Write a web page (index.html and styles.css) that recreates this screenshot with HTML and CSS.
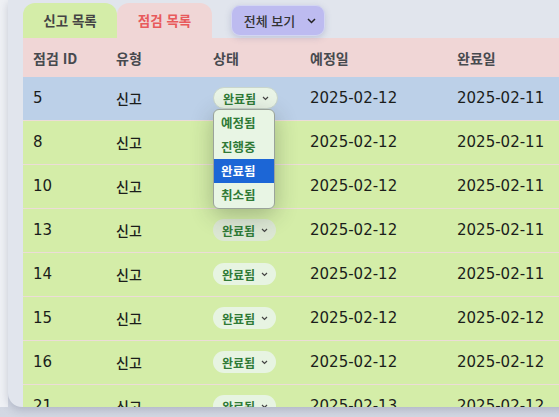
FILE: index.html
```html
<!DOCTYPE html>
<html lang="ko">
<head>
<meta charset="utf-8">
<link rel="stylesheet" href="styles.css">
</head>
<body>
<div class="page">
  <div class="card">
    <div class="tabs">
      <div class="tab tab-report">신고 목록</div>
      <div class="tab tab-inspect">점검 목록</div>
      <button class="filter">전체 보기 <svg class="chev" width="9" height="6" viewBox="0 0 9 6"><path d="M1 1l3.5 3.5L8 1" fill="none" stroke="#222" stroke-width="1.5"/></svg></button>
    </div>
    <table class="grid">
      <colgroup><col class="c1"><col class="c2"><col class="c3"><col class="c4"><col class="c5"></colgroup>
      <thead>
        <tr><th>점검 ID</th><th>유형</th><th>상태</th><th>예정일</th><th>완료일</th></tr>
      </thead>
      <tbody>
        <tr class="hover"><td>5</td><td>신고</td><td class="status-cell"><span class="pill open">완료됨 <svg class="chev" width="7" height="5" viewBox="0 0 7 5"><path d="M1 1l2.5 2.5L6 1" fill="none" stroke="#444" stroke-width="1.2"/></svg></span>
          <div class="menu">
            <div class="opt">예정됨</div>
            <div class="opt">진행중</div>
            <div class="opt sel">완료됨</div>
            <div class="opt">취소됨</div>
          </div></td><td>2025-02-12</td><td>2025-02-11</td></tr>
        <tr><td>8</td><td>신고</td><td></td><td>2025-02-12</td><td>2025-02-11</td></tr>
        <tr><td>10</td><td>신고</td><td></td><td>2025-02-12</td><td>2025-02-11</td></tr>
        <tr><td>13</td><td>신고</td><td><span class="pill shaded">완료됨 <svg class="chev" width="7" height="5" viewBox="0 0 7 5"><path d="M1 1l2.5 2.5L6 1" fill="none" stroke="#444" stroke-width="1.2"/></svg></span></td><td>2025-02-12</td><td>2025-02-11</td></tr>
        <tr><td>14</td><td>신고</td><td><span class="pill">완료됨 <svg class="chev" width="7" height="5" viewBox="0 0 7 5"><path d="M1 1l2.5 2.5L6 1" fill="none" stroke="#444" stroke-width="1.2"/></svg></span></td><td>2025-02-12</td><td>2025-02-11</td></tr>
        <tr><td>15</td><td>신고</td><td><span class="pill">완료됨 <svg class="chev" width="7" height="5" viewBox="0 0 7 5"><path d="M1 1l2.5 2.5L6 1" fill="none" stroke="#444" stroke-width="1.2"/></svg></span></td><td>2025-02-12</td><td>2025-02-12</td></tr>
        <tr><td>16</td><td>신고</td><td><span class="pill">완료됨 <svg class="chev" width="7" height="5" viewBox="0 0 7 5"><path d="M1 1l2.5 2.5L6 1" fill="none" stroke="#444" stroke-width="1.2"/></svg></span></td><td>2025-02-12</td><td>2025-02-12</td></tr>
        <tr><td>21</td><td>신고</td><td><span class="pill">완료됨 <svg class="chev" width="7" height="5" viewBox="0 0 7 5"><path d="M1 1l2.5 2.5L6 1" fill="none" stroke="#444" stroke-width="1.2"/></svg></span></td><td>2025-02-13</td><td>2025-02-12</td></tr>
      </tbody>
    </table>
  </div>
</div>
</body>
</html>
```

FILE: styles.css
```css
* { box-sizing: border-box; }
html, body {
  margin: 0;
  width: 559px;
  height: 417px;
  overflow: hidden;
  background: #c9cfdc;
  font-family: "DejaVu Sans", "Noto Sans CJK KR", sans-serif;
}
.page {
  height: 417px;
  background: linear-gradient(#eff1f5, #eff1f5) left top / 8px 407px no-repeat, linear-gradient(#c4cbda, #d3d8e3);
}
.card {
  margin-left: 8px;
  width: 640px;
  height: 407px;
  background: #e1e5ed;
  border-radius: 0 0 0 14px;
  padding: 3px 0 0 15px;
  overflow: hidden;
  box-shadow: 0 3px 8px rgba(70, 80, 110, 0.25);
}
.tabs {
  display: flex;
  align-items: flex-start;
  height: 35px;
}
.tab {
  height: 35px;
  width: 94px;
  border-radius: 12px 12px 0 0;
  display: flex;
  align-items: center;
  justify-content: center;
  font-family: "Noto Sans CJK KR", sans-serif;
  font-weight: 700;
  font-size: 13.5px;
  padding-bottom: 1px;
}
.tab-report { background: #d4eda8; color: #444; width: 94px; }
.tab-inspect { background: #f0d6d6; color: #e85a5c; width: 95px; }
.filter {
  margin: 2px 0 0 19px;
  height: 31px;
  width: 94px;
  border: 1px solid #d3d6f2;
  border-radius: 9px;
  background: #bdbbf0;
  box-shadow: 0 2px 6px rgba(90, 100, 150, 0.25);
  font-family: "Noto Sans CJK KR", sans-serif;
  font-weight: 500;
  font-size: 13px;
  color: #333;
  display: flex;
  align-items: center;
  justify-content: center;
  gap: 12px;
  padding: 0 0 0 4px;
}
.grid {
  border-collapse: collapse;
  table-layout: fixed;
  width: 630px;
}
.c1 { width: 83px; }
.c2 { width: 97px; }
.c3 { width: 97px; }
.c4 { width: 147px; }
.c5 { width: 206px; }
th {
  background: #f0d6d6;
  height: 39px;
  text-align: left;
  padding: 0 0 0 10px;
  font-family: "Noto Sans CJK KR", sans-serif;
  font-weight: 700;
  font-size: 14px;
  color: #474a4f;
}
td {
  height: 44px;
  padding: 0 0 0 10px;
  background: #d4eda8;
  border-top: 1px solid #ecdcd8;
  font-size: 15px;
  color: #1b1d1b;
  font-family: "DejaVu Sans", "Noto Sans CJK KR", sans-serif;
  vertical-align: middle;
}
td:nth-child(2) { font-family: "Noto Sans CJK KR", sans-serif; font-weight: 500; font-size: 14px; }
tr.hover td { background: #bcd0e8; height: 43px; border-top: none; }
.status-cell { position: relative; }
.pill {
  display: inline-flex;
  align-items: center;
  gap: 6px;
  height: 22px;
  padding: 0 8px 0 9px;
  border-radius: 11px;
  background: #e7f4e2;
  font-family: "Noto Sans CJK KR", sans-serif;
  font-weight: 700;
  font-size: 12px;
  color: #2f7a36;
  vertical-align: middle;
}
.pill.open { border: 1px solid #c9d6cc; background: #e9f4e6; }
.pill.shaded { background: #dce7d4; }
.menu {
  position: absolute;
  left: 10px;
  top: 32px;
  width: 62px;
  padding: 1px 0;
  background: #e8f5e4;
  border: 1px solid #9aa39a;
  border-radius: 6px;
  box-shadow: 0 6px 22px rgba(40, 50, 40, 0.3);
  z-index: 5;
  overflow: hidden;
}
.opt {
  height: 24px;
  line-height: 24px;
  padding-left: 7px;
  font-family: "Noto Sans CJK KR", sans-serif;
  font-weight: 700;
  font-size: 12.5px;
  color: #2f7a36;
}
.opt.sel { background: #1c66d6; color: #fff; }
```
